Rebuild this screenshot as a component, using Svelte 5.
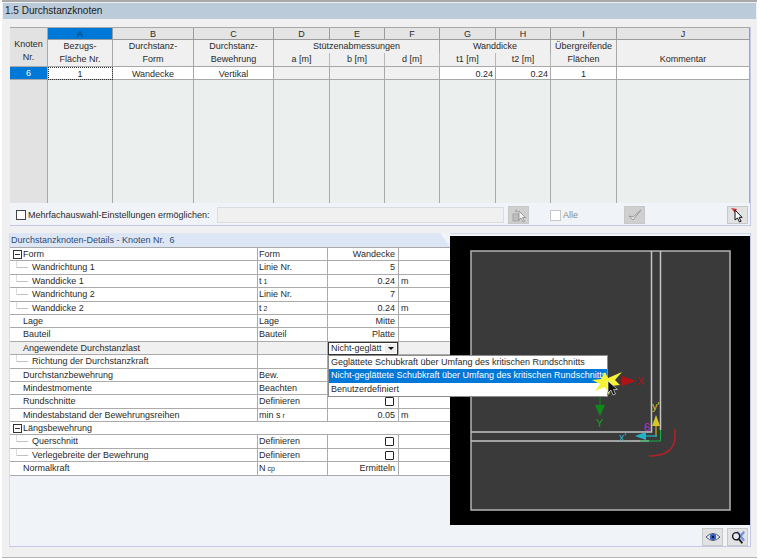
<script lang="ts">
  const letters = ['A', 'B', 'C', 'D', 'E', 'F', 'G', 'H', 'I', 'J'];

  const rows = [
    { label: 'Form', sym: 'Form', val: 'Wandecke', head: true },
    { label: 'Wandrichtung 1', sym: 'Linie Nr.', val: '5', sub: true },
    { label: 'Wanddicke 1', sym: 't', idx: '1', val: '0.24', unit: 'm', sub: true },
    { label: 'Wandrichtung 2', sym: 'Linie Nr.', val: '7', sub: true },
    { label: 'Wanddicke 2', sym: 't', idx: '2', val: '0.24', unit: 'm', sub: true },
    { label: 'Lage', sym: 'Lage', val: 'Mitte' },
    { label: 'Bauteil', sym: 'Bauteil', val: 'Platte' },
    { label: 'Angewendete Durchstanzlast', sym: '', select: true, active: true },
    { label: 'Richtung der Durchstanzkraft', sym: '', sub: true },
    { label: 'Durchstanzbewehrung', sym: 'Bew.' },
    { label: 'Mindestmomente', sym: 'Beachten' },
    { label: 'Rundschnitte', sym: 'Definieren', check: true },
    { label: 'Mindestabstand der Bewehrungsreihen', sym: 'min s', idx: 'r', val: '0.05', unit: 'm' },
    { label: 'Längsbewehrung', sym: '', head: true, wide: true },
    { label: 'Querschnitt', sym: 'Definieren', check: true, sub: true },
    { label: 'Verlegebreite der Bewehrung', sym: 'Definieren', check: true, sub: true },
    { label: 'Normalkraft', sym: 'N', idx: 'cp', val: 'Ermitteln' }
  ];

  const options = [
    'Geglättete Schubkraft über Umfang des kritischen Rundschnitts',
    'Nicht-geglättete Schubkraft über Umfang des kritischen Rundschnitts',
    'Benutzerdefiniert'
  ];
</script>

<div class="page">
  <div class="title">1.5 Durchstanzknoten</div>

  <div class="upper">
    <div class="sheet">
      <div class="corner"><span>Knoten</span><span>Nr.</span></div>
      {#each letters as l, i}
        <div class="letter" class:on={i === 0} style="grid-column: {i + 2}">{l}</div>
      {/each}

      <div class="head" style="grid-column: 2"><span>Bezugs-</span><span>Fläche Nr.</span></div>
      <div class="head" style="grid-column: 3"><span>Durchstanz-</span><span>Form</span></div>
      <div class="head" style="grid-column: 4"><span>Durchstanz-</span><span>Bewehrung</span></div>
      <div class="group" style="grid-column: 5 / 8">Stützenabmessungen</div>
      <div class="subhead" style="grid-column: 5">a [m]</div>
      <div class="subhead" style="grid-column: 6">b [m]</div>
      <div class="subhead" style="grid-column: 7">d [m]</div>
      <div class="group" style="grid-column: 8 / 10">Wanddicke</div>
      <div class="subhead" style="grid-column: 8">t1 [m]</div>
      <div class="subhead" style="grid-column: 9">t2 [m]</div>
      <div class="head" style="grid-column: 10"><span>Übergreifende</span><span>Flächen</span></div>
      <div class="head" style="grid-column: 11"><span></span><span>Kommentar</span></div>

      <div class="rownum">6</div>
      <div class="cell focus">1</div>
      <div class="cell">Wandecke</div>
      <div class="cell">Vertikal</div>
      <div class="cell off"></div>
      <div class="cell off"></div>
      <div class="cell off"></div>
      <div class="cell num">0.24</div>
      <div class="cell num">0.24</div>
      <div class="cell">1</div>
      <div class="cell"></div>

      <div class="rowblank"></div>
      {#each letters as _}
        <div class="blank"></div>
      {/each}
    </div>

    <div class="toolbar">
      <span class="box"></span>
      <span class="multi">Mehrfachauswahl-Einstellungen ermöglichen:</span>
      <span class="field"></span>
      <span class="btn dis">
        <svg width="16" height="15" viewBox="0 0 16 15">
          <rect x="2" y="6" width="6" height="7" fill="#bdbdbd" stroke="#a6a6a6" />
          <path d="M5 1l2 3-3 0z" fill="#a6a6a6" />
          <path d="M8 3v9l2-2 2 4 1.500-.7-2-3.800h3z" fill="#f2f2f2" stroke="#8a8a8a" stroke-width=".8" />
        </svg>
      </span>
      <span class="box faint"></span>
      <span class="all">Alle</span>
      <span class="btn dis check">
        <svg width="16" height="14" viewBox="0 0 16 14">
          <path d="M2 8l4 4 8-10-8 7z" fill="#eeeeee" stroke="#979797" stroke-width="1" />
        </svg>
      </span>
      <span class="btn pin">
        <svg width="16" height="16" viewBox="0 0 16 16">
          <path d="M1 1l6 1-2 4z" fill="#d8343c" />
          <path d="M5 3v10l2.500-2 2 4 1.600-.8-2-3.800h3z" fill="#fff" stroke="#111" stroke-width="1" />
        </svg>
      </span>
    </div>
  </div>

  <div class="lower">
    <div class="details">
      <div class="tab">Durchstanzknoten-Details - Knoten Nr.&nbsp; 6</div>
      <div class="tree">
        {#each rows as r}
          <div class="row" class:active={r.active} class:wide={r.wide}>
            <div class="name" class:sub={r.sub}>
              {#if r.head}
                <span class="expander"></span>
              {/if}
              {r.label}
            </div>
            {#if !r.wide}
              <div class="sym">{r.sym}{#if r.idx}<small>&nbsp;{r.idx}</small>{/if}</div>
              <div class="val">
                {#if r.select}
                  <span class="select">Nicht-geglätt<i></i></span>
                {:else if r.check}
                  <span class="tick"></span>
                {:else}
                  {r.val ?? ''}
                {/if}
              </div>
              <div class="unit">{r.unit ?? ''}</div>
            {/if}
          </div>
        {/each}
      </div>
      <ul class="menu">
        {#each options as o, i}
          <li class:hi={i === 1}>{o}</li>
        {/each}
      </ul>
    </div>

    <div class="side">
      <div class="view">
        <svg width="300" height="289" viewBox="450 236 300 289">
          <rect x="450" y="236" width="300" height="289" fill="#000" />
          <rect x="471" y="251" width="259" height="259" fill="#3a3a3a" stroke="#b4b4b4" stroke-width="1.500" />
          <path d="M651.500 251V432H471M660.500 251V430M471 441H649" fill="none" stroke="#c4c4c4" stroke-width="1.500" />
          <path d="M660.500 430V441H640" fill="none" stroke="#16b04a" stroke-width="1" />
          <path d="M675 429V436Q675 456 649 456" fill="none" stroke="#b8202a" stroke-width="1.500" />

          <path d="M620 381H628" stroke="#a01010" stroke-width="1.500" />
          <path d="M622 376L636 381L622 386z" fill="#b01218" />
          <text x="637" y="385" class="axis" fill="#b01218">X</text>

          <path d="M600 396V406" stroke="#0e7a14" stroke-width="1.500" />
          <path d="M595 405L600 416L605 405z" fill="#0e8a18" />
          <text x="596" y="427" class="axis" fill="#12a020">Y</text>

          <path d="M656 426V437" stroke="#b09a1c" stroke-width="1.500" />
          <path d="M652 426L656 415L660 426z" fill="#d8c62a" />
          <text x="652" y="410" class="axis" fill="#d8c62a">y'</text>

          <path d="M646 436H657" stroke="#20a0b0" stroke-width="1.500" />
          <path d="M646 432L635 436L646 440z" fill="#22b4c4" />
          <text x="619" y="441" class="axis" fill="#22b4c4">x'</text>

          <text x="644" y="431" class="axis" fill="#c030c8">6</text>
        </svg>
      </div>
      <div class="viewbar">
        <span class="btn">
          <svg width="16" height="12" viewBox="0 0 16 12">
            <path d="M1 6Q8 -1 15 6Q8 13 1 6z" fill="#e8ecf6" stroke="#50586a" />
            <circle cx="8" cy="6" r="3.200" fill="#3c5cc8" />
            <circle cx="8" cy="6" r="1.200" fill="#10182c" />
          </svg>
        </span>
        <span class="btn">
          <svg width="17" height="15" viewBox="0 0 17 17">
            <path d="M8 2L16 12M16 2L8 12" stroke="#6e8fdc" stroke-width="2.500" />
            <circle cx="7" cy="7" r="4" fill="#e8eef8" fill-opacity=".6" stroke="#1c1c1c" stroke-width="1.600" />
            <path d="M10 10L14 15" stroke="#1c1c1c" stroke-width="2.200" />
          </svg>
        </span>
      </div>
    </div>

    <svg class="pointer" width="36" height="34" viewBox="0 0 36 34">
      <path d="M14 5L17 11L31 5L24 13L29 18L20 19L18 28L14 20L4 24L9 17L1 13L10 12z" fill="#f6f23a" />
      <path d="M17 14V26L20 23L22 28L24.500 27L22.500 22.500H26.500z" fill="#111" stroke="#fff" stroke-width=".6" />
    </svg>
  </div>
</div>

<style>
  :global(body) {
    background: #ffffff;
  }

  .page {
    width: 755px;
    height: 558px;
    margin-left: 2px;
    box-sizing: border-box;
    padding-top: 1px;
    background: #f0f0f0;
    border-top: 2px solid #a9a9a9;
    border-bottom: 1px solid #b5b5b5;
    font-family: "Liberation Sans", Arial, sans-serif;
    font-size: 9px;
    line-height: 13px;
    color: #2a2a2a;
  }

  .title {
    height: 16px;
    margin: 0 1px;
    padding-left: 2px;
    background: #bccbd9;
    font-size: 10px;
    line-height: 16px;
    color: #202020;
  }

  .upper {
    width: 741px;
    margin: 8px 0 0 8px;
    box-sizing: border-box;
    background: #f0f4f8;
    border-right: 1px solid #c4c8e8;
    border-bottom: 1px solid #c4c8e8;
  }

  .sheet {
    display: grid;
    grid-template-columns: 38px 65px 81px 80px 56px 55px 55px 56px 55px 66px 133px;
    grid-template-rows: 12px 13px 14px 13px 123px;
    background: #ececec;
    border-top: 1px solid #a8a8a8;
  }

  .corner {
    grid-column: 1;
    grid-row: 1 / 4;
    display: flex;
    flex-direction: column;
    justify-content: center;
    align-items: center;
    padding-top: 7px;
    background: #e2e2e2;
    border-right: 1px solid #a8a8a8;
    border-bottom: 1px solid #a8a8a8;
    line-height: 13px;
  }

  .letter {
    grid-row: 1;
    text-align: center;
    line-height: 12px;
    background: #e4e4e4;
    border-right: 1px solid #9c9c9c;
    border-bottom: 1px solid #9c9c9c;
    box-sizing: border-box;
  }

  .letter.on {
    background: #0078d7;
    color: #0b3a66;
  }

  .head {
    grid-row: 2 / 4;
    display: flex;
    flex-direction: column;
    align-items: center;
    background: #f0f0f0;
    border-right: 1px solid #a8a8a8;
    border-bottom: 1px solid #a8a8a8;
  }

  .head span {
    height: 13px;
  }

  .group {
    grid-row: 2;
    text-align: center;
    background: #f0f0f0;
    border-right: 1px solid #a8a8a8;
  }

  .subhead {
    grid-row: 3;
    text-align: center;
    background: #f0f0f0;
    border-right: 1px solid #b8b8b8;
    border-bottom: 1px solid #a8a8a8;
  }

  .rownum {
    grid-column: 1;
    text-align: center;
    background: #0078d7;
    color: #fff;
    border-right: 1px solid #a8a8a8;
    border-bottom: 1px solid #a8a8a8;
  }

  .cell {
    background: #fff;
    text-align: center;
    line-height: 14px;
    border-right: 1px solid #a8a8a8;
    border-bottom: 1px solid #a8a8a8;
    box-sizing: border-box;
  }

  .cell.off {
    background: #f0f0f0;
  }

  .cell.num {
    text-align: right;
    padding-right: 2px;
  }

  .cell.focus {
    outline: 1px dotted #333;
    outline-offset: -1px;
  }

  .rowblank {
    background: #e2e2e2;
    border-right: 1px solid #a8a8a8;
  }

  .blank {
    background: #ebf0ef;
    border-right: 1px solid #a8a8a8;
  }

  .toolbar {
    display: flex;
    align-items: center;
    height: 22px;
    box-sizing: border-box;
    padding: 2px 0 0 6px;
  }

  .box {
    width: 8px;
    height: 8px;
    background: #fff;
    border: 1px solid #444;
    flex: none;
  }

  .box.faint {
    width: 9px;
    height: 9px;
    margin-left: 21px;
    border-color: #c8c8c8;
  }

  .multi {
    margin-left: 2px;
    width: 189px;
    white-space: nowrap;
  }

  .field {
    width: 285px;
    height: 14px;
    background: #f0f0f0;
    border: 1px solid #dcdcdc;
  }

  .btn {
    display: flex;
    align-items: center;
    justify-content: center;
    width: 19px;
    height: 16px;
    background: #e2e2e2;
    border: 1px solid #c8c8c8;
    flex: none;
  }

  .btn.dis {
    margin-left: 4px;
    background: #cfcfcf;
  }

  .all {
    margin-left: 2px;
    width: 61px;
    color: #8a8a8a;
  }

  .btn.check {
    margin-left: 0;
  }

  .btn.pin {
    margin-left: 82px;
  }

  .lower {
    position: relative;
    display: grid;
    grid-template-columns: 440px 301px;
    margin: 7px 0 0 7px;
    width: 742px;
    height: 314px;
    box-sizing: border-box;
    background: #f0f4f8;
    border-left: 1px solid #d4dcf0;
    border-bottom: 1px solid #c4c8e8;
  }

  .tab {
    height: 14px;
    padding-left: 1px;
    background: #dce6f5;
    color: #2c4a78;
    line-height: 15px;
    clip-path: polygon(0 0, 430px 0, 100% 100%, 0 100%);
  }

  .tree {
    border-top: 1px solid #a8a8a8;
    background: #fff;
  }

  .row {
    display: grid;
    grid-template-columns: 248px 70px 71px 49px;
    height: 13.400px;
    box-sizing: border-box;
    border-bottom: 1px solid #ababab;
    line-height: 12px;
    white-space: nowrap;
  }

  .row.wide {
    grid-template-columns: 1fr;
  }

  .row.active {
    background: #f0f0f0;
  }

  .name {
    position: relative;
    padding-left: 13px;
    border-right: 1px solid #ababab;
  }

  .row.wide .name {
    border-right: 0;
  }

  .name.sub {
    padding-left: 22px;
  }

  .name.sub::before {
    content: "";
    position: absolute;
    left: 7px;
    top: 6px;
    width: 11px;
    border-top: 1px solid #c0c0c0;
  }

  .name.sub::after {
    content: "";
    position: absolute;
    left: 6px;
    top: 0;
    height: 7px;
    border-left: 1px solid #dddddd;
  }

  .expander {
    position: absolute;
    left: 3px;
    top: 2px;
    width: 7px;
    height: 7px;
    border: 1px solid #333;
    background: linear-gradient(#333, #333) center / 5px 1px no-repeat;
  }

  .sym {
    padding-left: 1px;
    border-right: 1px solid #ababab;
  }

  .sym small {
    font-size: 7px;
  }

  .val {
    position: relative;
    padding-right: 3px;
    text-align: right;
    border-right: 1px solid #ababab;
  }

  .unit {
    padding-left: 2px;
  }

  .select {
    position: absolute;
    left: 0;
    top: 0;
    width: 70px;
    height: 13px;
    box-sizing: border-box;
    padding-left: 2px;
    background: #fff;
    border: 1px solid #333;
    text-align: left;
    line-height: 11px;
  }

  .select i {
    position: absolute;
    right: 1px;
    top: 1px;
    width: 11px;
    height: 9px;
    background: #eeeeee;
  }

  .select i::after {
    content: "";
    position: absolute;
    left: 3px;
    top: 3px;
    border: 3px solid transparent;
    border-top-color: #111;
  }

  .tick {
    position: absolute;
    right: 4px;
    top: 2px;
    width: 7px;
    height: 7px;
    background: #fff;
    border: 1.500px solid #222;
    border-radius: 1px;
  }

  .menu {
    position: absolute;
    left: 318px;
    top: 122px;
    width: 280px;
    margin: 0;
    padding: 0;
    list-style: none;
    background: #fff;
    border: 1px solid #8c8c8c;
    box-sizing: border-box;
    z-index: 2;
  }

  .menu li {
    height: 13.400px;
    padding-left: 2px;
    line-height: 13px;
    white-space: nowrap;
    overflow: hidden;
  }

  .menu li.hi {
    background: #0078d7;
    color: #fff;
  }

  .side {
    display: flex;
    flex-direction: column;
    padding-top: 2px;
    border-top: 1px solid #d0d8ee;
    box-sizing: border-box;
    border-right: 1px solid #c4c8e8;
  }

  .view {
    height: 289px;
    line-height: 0;
  }

  .axis {
    font-family: "Liberation Sans", sans-serif;
    font-size: 11px;
  }

  .viewbar {
    display: flex;
    justify-content: flex-end;
    gap: 4px;
    padding: 3px 2px 0 0;
  }

  .pointer {
    position: absolute;
    left: 581px;
    top: 134px;
    z-index: 3;
  }
</style>
